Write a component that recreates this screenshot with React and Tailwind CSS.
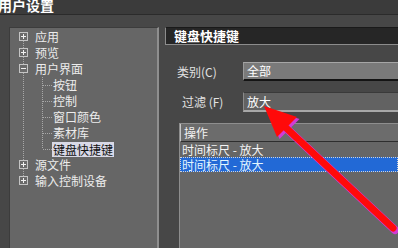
import React from "react";

const tree = [
  { label: "应用", root: true, box: "+", first: true },
  { label: "预览", root: true, box: "+" },
  { label: "用户界面", root: true, box: "-" },
  { label: "按钮" },
  { label: "控制" },
  { label: "窗口颜色" },
  { label: "素材库" },
  { label: "键盘快捷键", last: true, selected: true },
  { label: "源文件", root: true, box: "+" },
  { label: "输入控制设备", root: true, box: "+", last: true },
];

const dot = { stroke: "#a8a8a8", strokeWidth: 1, strokeDasharray: "1 1" };

// connector lines + expand box for one tree row
const TreeLines = ({ item }) => {
  if (item.root) {
    return (
      <svg width="22" height="16" className="shrink-0">
        <line x1="13.5" y1={item.first ? 8 : 0} x2="13.5" y2={item.last ? 8 : 16} {...dot} />
        <rect x="9.5" y="3.5" width="8" height="8" fill="#6a6a6a" stroke="#c4c4c4" />
        <line x1="11" y1="7.5" x2="16" y2="7.5" stroke="#f0f0f0" />
        {item.box === "+" && <line x1="13.5" y1="5" x2="13.5" y2="10" stroke="#f0f0f0" />}
      </svg>
    );
  }
  return (
    <svg width="42" height="16" className="shrink-0">
      <line x1="13.5" y1="0" x2="13.5" y2="16" {...dot} />
      <line x1="32.5" y1="0" x2="32.5" y2={item.last ? 8 : 16} {...dot} />
      <line x1="33" y1="8.5" x2="42" y2="8.5" {...dot} />
    </svg>
  );
};

const App = () => {
  return (
    <div className="relative w-[398px] h-[248px] overflow-hidden bg-[#474747] font-['Noto_Sans_CJK_SC',sans-serif] text-[12px] text-[#ececec]">
      <div className="h-[15px] overflow-hidden bg-[#3b3b3b] border-b border-[#2b2b2b]">
        <span className="block -mt-[2px] -ml-[2px] text-[14px] leading-[15px] font-bold text-white">
          用户设置
        </span>
      </div>

      <div className="flex pt-[12px] h-[233px]">
        <div className="ml-[9px] w-[150px] shrink-0 bg-[#666666] border-t border-l border-[#3c3c3c] border-r-2 border-r-[#8f8f8f] pt-[1px]">
          {tree.map((item) => (
            <div key={item.label} className="flex items-center h-[16px] leading-[16px]">
              <TreeLines item={item} />
              {item.root ? (
                <span className="ml-[3px] whitespace-nowrap">{item.label}</span>
              ) : (
                <span
                  className={
                    item.selected
                      ? "px-[1px] h-[15px] leading-[15px] bg-[#d9d9e6] text-[#111] whitespace-nowrap"
                      : "ml-[1px] whitespace-nowrap"
                  }
                >
                  {item.label}
                </span>
              )}
            </div>
          ))}
        </div>

        <div className="flex-1 min-w-0 pl-[6px]">
          <div className="h-[18px] bg-[#262626] border-t border-[#1a1a1a] border-l border-b border-l-[#8c8c8c] border-b-[#8c8c8c] pl-[8px] text-[13px] leading-[16px] font-bold text-white">
            键盘快捷键
          </div>

          <div className="flex items-center mt-[17px] h-[19px]">
            <span className="w-[78px] pl-[12px] shrink-0 text-[#e2e2e2]">类别(C)</span>
            <div className="flex-1 h-[19px] bg-[#7a7a7a] border-t border-t-[#a6a6a6] border-l border-l-[#9a9a9a] border-b-2 border-b-[#141414] pl-[3px] leading-[16px] text-white">
              全部
            </div>
          </div>

          <div className="flex items-center mt-[11px] h-[20px]">
            <span className="w-[78px] pl-[17px] shrink-0 text-[#e2e2e2]">过滤 (F)</span>
            <div className="flex-1 h-[20px] bg-[#626262] border-t border-t-[#3a3a3a] border-l border-l-[#8a8a8a] border-b-2 border-b-[#a8a8a8] pl-[3px] leading-[17px] text-white">
              放大
            </div>
          </div>

          <div className="ml-[14px] mt-[11px] h-[140px] bg-[#666666] border-t border-l border-[#8e8e8e]">
            <div className="h-[18px] bg-[#6c6c6c] border-l border-l-[#c6c6c6] border-b border-b-[#2e2e2e] pl-[3px] leading-[17px] text-[#f2f2f2]">
              操作
            </div>
            <div className="h-[15px] pl-[2px] leading-[15px] text-[#f4f4f4] whitespace-nowrap">
              时间标尺 - 放大
            </div>
            <div className="h-[15px] pl-[2px] leading-[15px] bg-[#2269d6] outline-1 outline-dotted outline-[#d4d4d4] -outline-offset-1 text-[#e2f6ff] whitespace-nowrap">
              时间标尺 - 放大
            </div>
          </div>
        </div>
      </div>

      {/* red annotation arrow drawn over the dialog */}
      <svg className="absolute inset-0 pointer-events-none" width="398" height="248">
        <line x1="285" y1="127" x2="395" y2="230" stroke="#d23ad6" strokeWidth="8" strokeLinecap="round" />
        <polygon points="265,107 278,138 298,118" fill="#d23ad6" transform="translate(1.5,1)" />
        <line x1="283" y1="125" x2="393" y2="228" stroke="#ff0a0a" strokeWidth="7" strokeLinecap="round" />
        <polygon points="264,106 277,137 297,117" fill="#ff0a0a" />
      </svg>
    </div>
  );
};

export default App;
